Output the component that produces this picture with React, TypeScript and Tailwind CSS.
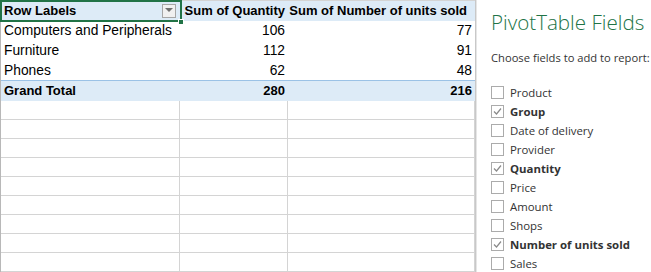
import React from "react";

const cellFont = { fontFamily: '"Liberation Sans", Arial, sans-serif' };
const panelFont = { fontFamily: '"Open Sans", "Noto Sans", sans-serif' };

const rows = [
  ["Computers and Peripherals", "106", "77"],
  ["Furniture", "112", "91"],
  ["Phones", "62", "48"],
];

const fields: [string, boolean][] = [
  ["Product", false],
  ["Group", true],
  ["Date of delivery", false],
  ["Provider", false],
  ["Quantity", true],
  ["Price", false],
  ["Amount", false],
  ["Shops", false],
  ["Number of units sold", true],
  ["Sales", false],
];

function Check({ checked }: { checked: boolean }) {
  return (
    <div className="w-[13px] h-[13px] border border-[#ababab] bg-white flex items-center justify-center shrink-0">
      {checked && (
        <svg width="11" height="11" viewBox="0 0 11 11">
          <polyline points="2,5.5 4.5,8 9,2.5" fill="none" stroke="#8a8a8a" strokeWidth="1.2" />
        </svg>
      )}
    </div>
  );
}

export default function App() {
  return (
    <div className="w-[651px] h-[272px] overflow-hidden flex bg-white text-[13.8px] text-black" style={cellFont}>
      <div className="w-[475px] shrink-0 flex flex-col border-t border-[#d4d4d4] border-l border-l-[#b8b8b8]">
        <div className="relative flex h-[20px] bg-[#ddebf7] border-b border-[#ddebf7] font-bold text-[13px]">
          <div className="w-[179px] flex items-center pl-[3px] pr-[4px] justify-between">
            <span>Row Labels</span>
            <div className="w-[14px] h-[14px] border border-[#a6a6a6] bg-[#f0f0f0] flex items-center justify-center">
              <svg width="8" height="5" viewBox="0 0 8 5"><polygon points="0,0 8,0 4,4" fill="#707070" /></svg>
            </div>
          </div>
          <div className="w-[108px] flex items-center justify-end pr-[3px]">Sum of Quantity</div>
          <div className="w-[187px] flex items-center justify-end pr-[8px]">Sum of Number of units sold</div>
          <div className="absolute left-[-1px] top-[-1px] w-[182px] h-[22px] border-2 border-[#217346]" />
          <div className="absolute left-[177px] top-[18px] w-[6px] h-[6px] bg-[#217346] border border-white" />
        </div>
        {rows.map((r, i) => (
          <div key={i} className={`flex h-[20px] pt-[1px] ${i === 2 ? "border-b border-[#9bc2e6]" : "border-b border-white"}`}>
            <div className="w-[179px] flex items-center pl-[3px]">{r[0]}</div>
            <div className="w-[108px] flex items-center justify-end pr-[3px]">{r[1]}</div>
            <div className="w-[187px] flex items-center justify-end pr-[3px]">{r[2]}</div>
          </div>
        ))}
        <div className="flex h-[20px] bg-[#ddebf7] border-b border-[#ddebf7] font-bold text-[13px]">
          <div className="w-[179px] flex items-center pl-[3px]">Grand Total</div>
          <div className="w-[108px] flex items-center justify-end pr-[3px]">280</div>
          <div className="w-[187px] flex items-center justify-end pr-[3px]">216</div>
        </div>
        {Array.from({ length: 9 }).map((_, i) => (
          <div key={i} className="flex h-[20px] border-b border-[#d4d4d4]">
            <div className="w-[179px] border-r border-[#d4d4d4]" />
            <div className="w-[108px] border-r border-[#d4d4d4]" />
            <div className="w-[187px] border-r border-[#d4d4d4]" />
          </div>
        ))}
      </div>
      <div className="w-[2px] shrink-0 bg-[#e6e6e6] border-l border-[#c8c8c8]" />
      <div className="flex-1 bg-white pl-[14px] overflow-hidden whitespace-nowrap" style={panelFont}>
        <div className="mt-[6px] text-[20.6px] font-light text-[#217346] leading-[32px]">PivotTable Fields</div>
        <div className="mt-[12px] text-[11.2px] text-[#333] leading-[16px]">Choose fields to add to report:</div>
        <div className="mt-[17px] flex flex-col">
          {fields.map(([name, c]) => (
            <div key={name} className="h-[19px] flex items-center gap-[6px]">
              <Check checked={c} />
              <span className={`text-[11.4px] text-[#333] ${c ? "font-bold" : ""}`}>{name}</span>
            </div>
          ))}
        </div>
      </div>
    </div>
  );
}
